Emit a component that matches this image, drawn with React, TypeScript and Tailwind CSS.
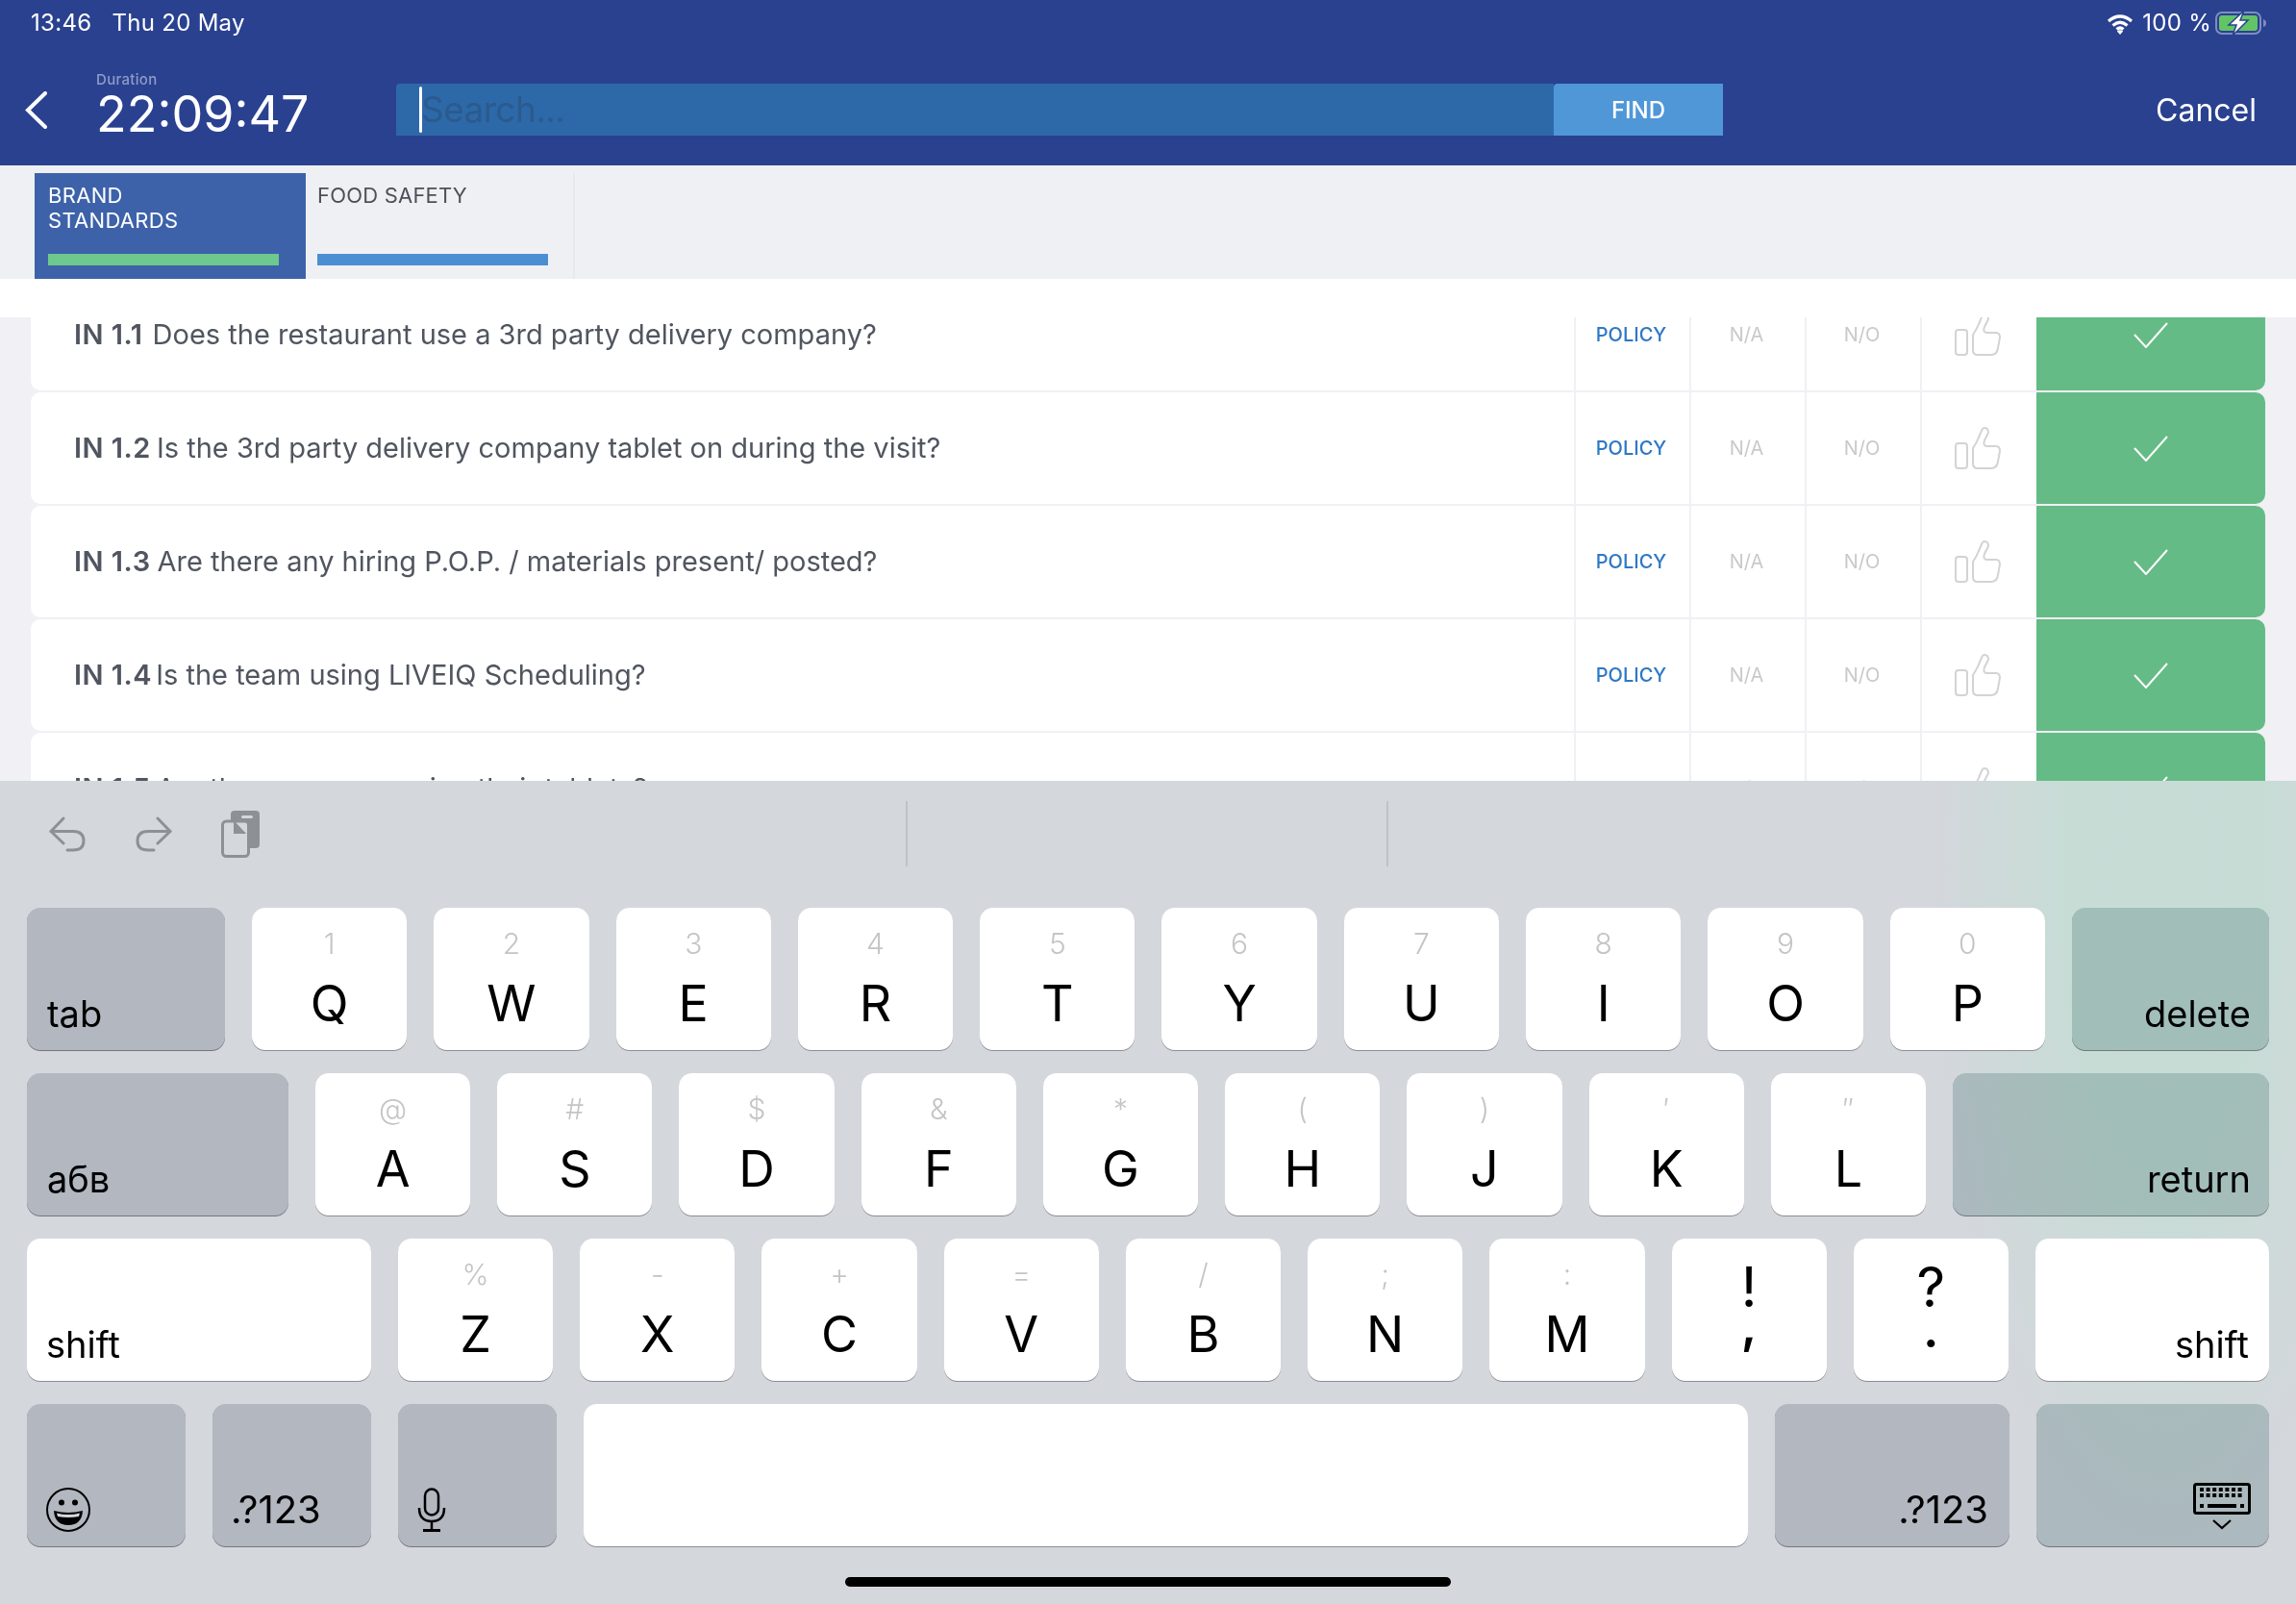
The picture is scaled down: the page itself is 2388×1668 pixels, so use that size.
const questions = [
  { id: 'IN 1.1', gap: 'mr-[10px]', text: 'Does the restaurant use a 3rd party delivery company?' },
  { id: 'IN 1.2', gap: 'mr-[6px]', text: 'Is the 3rd party delivery company tablet on during the visit?' },
  { id: 'IN 1.3', gap: 'mr-[7px]', text: 'Are there any hiring P.O.P. / materials present/ posted?' },
  { id: 'IN 1.4', gap: 'mr-[4px]', text: 'Is the team using LIVEIQ Scheduling?' },
  { id: 'IN 1.5', gap: 'mr-[6px]', text: 'Are the managers using their tablets?' },
];

const row1 = [['1', 'Q'], ['2', 'W'], ['3', 'E'], ['4', 'R'], ['5', 'T'], ['6', 'Y'], ['7', 'U'], ['8', 'I'], ['9', 'O'], ['0', 'P']];
const row2 = [['@', 'A'], ['#', 'S'], ['$', 'D'], ['&', 'F'], ['*', 'G'], ['(', 'H'], [')', 'J'], ['\u2032', 'K'], ['\u2033', 'L']];
const row3 = [['%', 'Z'], ['-', 'X'], ['+', 'C'], ['=', 'V'], ['/', 'B'], [';', 'N'], [':', 'M']];

const keyBase = 'h-[148px] rounded-[14px] shadow-[0_1px_0_#8b8d92]';

const LetterKey = ({ top, letter }: { top: string; letter: string }) => (
  <div className={`${keyBase} flex-1 min-w-0 bg-white flex flex-col items-center pt-[18px]`}>
    <span className="h-[38px] text-[30px] leading-[38px] text-[#c5c5c7] font-light">{top}</span>
    <span className="mt-[18px] text-[52px] leading-[52px] text-black">{letter}</span>
  </div>
);

const ModKey = ({ label, width, right, children, green, wide }: { label?: string; width: string; right?: boolean; children?: React.ReactNode; green?: boolean; wide?: boolean }) => (
  <div className={`${keyBase} ${width} shrink-0 mix-blend-multiply flex items-end pl-[21px] pr-[19px] pb-[19px] ${green ? 'bg-[#cfdcdc]' : 'bg-[#d6d9df]'} ${right ? 'justify-end' : ''}`}>
    {label && <span className={`leading-[38px] text-black ${wide ? (right ? 'text-[40px] mr-[3px]' : 'text-[40px] -ml-[2px]') : 'text-[38px]'}`}>{label}</span>}
    {children}
  </div>
);

const WhiteLabelKey = ({ label, width, right }: { label: string; width: string; right?: boolean }) => (
  <div className={`${keyBase} ${width} shrink-0 bg-white flex items-end pl-[20px] pr-[21px] pb-[19px] ${right ? 'justify-end' : ''}`}>
    <span className="text-[38px] leading-[38px] text-black">{label}</span>
  </div>
);

const PunctKey = ({ top, bottom, offset }: { top: string; bottom: string; offset: string }) => (
  <div className={`${keyBase} flex-1 min-w-0 bg-white flex flex-col items-center pt-[21px]`}>
    <span className="text-[58px] leading-[58px] text-black">{top}</span>
    <span className={`${offset} text-[52px] leading-[52px] font-semibold text-black`}>{bottom}</span>
  </div>
);

const ThumbIcon = () => (
  <svg width="48" height="44" viewBox="0 0 48 44" className="mb-[1px]" fill="none" stroke="#d2d3d5" strokeWidth="2">
    <rect x="1" y="17" width="12" height="26" rx="3" />
    <path d="M19 22 L19 38 Q19 43 24 43 L38 43 Q44 43 45 36 L47 25 Q47 20 43 20 H33 Q29 19 31 14 L35 6 Q35 1 31 1 Q29 1 28 4 L25 11 Q23 16 19 22Z" />
  </svg>
);

const CheckIcon = () => (
  <svg width="36" height="27" viewBox="0 0 36 27" fill="none" stroke="#ffffff" strokeWidth="2">
    <path d="M1 13 L13 26 L35 1" />
  </svg>
);

const QuestionRow = ({ id, gap, text }: { id: string; gap: string; text: string }) => (
  <div className="flex h-[116px] shrink-0 rounded-[10px] bg-white overflow-hidden">
    <div className="flex-1 min-w-0 pl-[45px] flex items-center text-[29px] text-[#50555f] whitespace-nowrap">
      <span className={`${gap} font-semibold tracking-[0.5px]`}>{id}</span>
      <span>{text}</span>
    </div>
    <div className="w-[120px] border-l-2 border-[#f0f0f5] pr-[3px] flex items-center justify-center text-[20px] font-medium text-[#2f78c4]">POLICY</div>
    <div className="w-[120px] border-l-2 border-[#f0f0f5] pr-[3px] flex items-center justify-center text-[20px] text-[#c9c9cd]">N/A</div>
    <div className="w-[120px] border-l-2 border-[#f0f0f5] pr-[3px] flex items-center justify-center text-[20px] text-[#c9c9cd]">N/O</div>
    <div className="w-[121px] border-l-2 border-[#f0f0f5] pr-[4px] flex items-center justify-center"><ThumbIcon /></div>
    <div className="w-[238px] bg-[#65bb85] flex items-center justify-center"><CheckIcon /></div>
  </div>
);

export default function App() {
  return (
    <div className="w-[2388px] h-[1668px] overflow-hidden flex flex-col bg-white [font-family:Inter,sans-serif]">
      {/* header */}
      <div className="h-[172px] shrink-0 bg-[#2a4190] text-white">
        <div className="h-[46px] flex pl-[32px] pr-[30px] pt-[12px] text-[24px] leading-[24px] tracking-[0.3px]">
          <span>13:46</span>
          <span className="ml-[21px]">Thu 20 May</span>
          <div className="ml-auto flex items-start">
            <svg width="28" height="22" viewBox="0 0 28 22" className="mt-[2px]" fill="none" stroke="#ffffff" strokeWidth="3.2">
              <path d="M2 8 Q14 -2 26 8" />
              <path d="M6.5 12.5 Q14 6 21.5 12.5" />
              <path d="M10.5 16.5 Q14 13.5 17.5 16.5" />
              <path d="M14 22 L10.8 18.6 Q14 16 17.2 18.6Z" fill="#ffffff" stroke="none" />
            </svg>
            <span className="ml-[9px]">100 %</span>
            <svg width="54" height="26" viewBox="0 0 54 26" className="ml-[4px] -mt-[1px]">
              <rect x="1" y="2" width="46" height="22" rx="6" fill="none" stroke="#7f8cc0" strokeWidth="2" />
              <rect x="4" y="5" width="40" height="16" rx="3" fill="#62c466" />
              <path d="M50 9 Q53 10 53 13 Q53 16 50 17Z" fill="#7f8cc0" />
              <path d="M30 0 L14 15 H22 L18 26 L34 10 H26Z" fill="#ffffff" stroke="#2a4190" strokeWidth="1.5" />
            </svg>
          </div>
        </div>
        <div className="flex items-start pl-[26px] pr-[41px]">
          <svg width="23" height="39" viewBox="0 0 23 39" className="mt-[49px] shrink-0" fill="none" stroke="#ffffff" strokeWidth="4" strokeLinecap="round">
            <path d="M21 2 L3 19.5 L21 37" />
          </svg>
          <div className="ml-[51px] w-[312px] shrink-0 pt-[29px]">
            <div className="text-[15px] leading-[16px] tracking-[0.3px] font-medium text-[#8f9cc7]">Duration</div>
            <div className="mt-[2px] text-[52px] leading-[52px]">22:09:47</div>
          </div>
          <div className="mt-[41px] h-[54px] flex shrink-0">
            <div className="relative w-[1204px] rounded-tl-[4px] bg-[#2d69a8] pl-[26px] text-[37px] leading-[54px] tracking-[-0.6px] text-[#2b5a8e]">
              Search...
              <div className="absolute left-[24px] top-[3px] w-[3px] h-[48px] rounded-full bg-white" />
            </div>
            <div className="w-[176px] pt-[2px] rounded-tl-[4px] bg-[#5097d8] flex items-center justify-center text-[24px] font-medium text-white">FIND</div>
          </div>
          <div className="ml-auto mt-[52px] text-[32px] leading-[34px]">Cancel</div>
        </div>
      </div>

      {/* tabs */}
      <div className="h-[118px] shrink-0 bg-[#eff0f4] pt-[8px] pl-[36px] flex">
        <div className="w-[282px] bg-[#3d62aa] pl-[14px] pt-[10px] text-white">
          <div className="h-[74px] text-[22px] leading-[26px] tracking-[0.3px]">BRAND<br />STANDARDS</div>
          <div className="w-[240px] h-[12px] bg-[#6dc98d]" />
        </div>
        <div className="w-[280px] border-r-2 border-[#e8e9ee] pl-[12px] pt-[10px] text-[#4e5058]">
          <div className="h-[74px] text-[22px] leading-[26px] tracking-[0.2px]">FOOD SAFETY</div>
          <div className="w-[240px] h-[12px] bg-[#4b8fd2]" />
        </div>
      </div>

      <div className="h-[40px] shrink-0 bg-white" />

      {/* questions */}
      <div className="flex-1 min-h-0 overflow-hidden bg-[#f0f0f5] px-[32px]">
        <div className="-mt-[40px] flex flex-col gap-[2px]">
          {questions.map((q) => (
            <QuestionRow key={q.id} id={q.id} gap={q.gap} text={q.text} />
          ))}
        </div>
      </div>

      {/* keyboard */}
      <div className="h-[856px] shrink-0 bg-[#d4d7dc] bg-[radial-gradient(ellipse_240px_700px_at_2250px_100px,#c6dcd5_0%,#c8dcd6_45%,#d4d7dc_100%)]">
        <div className="h-[110px] mb-[22px] flex items-center pl-[51px]">
          <svg width="38" height="37" viewBox="0 0 38 37" fill="none" stroke="#8d9095" strokeWidth="3" strokeLinecap="round" strokeLinejoin="round">
            <path d="M15 2 L2 15.5 L15 28" />
            <path d="M2 15.5 H25 Q36 15.5 36 25.5 Q36 35 25 35 H19" />
          </svg>
          <svg width="38" height="37" viewBox="0 0 38 37" className="ml-[52px]" fill="none" stroke="#8d9095" strokeWidth="3" strokeLinecap="round" strokeLinejoin="round">
            <path d="M23 2 L36 15.5 L23 28" />
            <path d="M36 15.5 H13 Q2 15.5 2 25.5 Q2 35 13 35 H19" />
          </svg>
          <svg width="40" height="49" viewBox="0 0 40 49" className="ml-[51px]">
            <rect x="10" y="0" width="30" height="39" rx="4" fill="#8d9095" />
            <rect x="21" y="5" width="12" height="3" rx="1.5" fill="#d4d7dc" />
            <rect x="1.5" y="11" width="27" height="36.5" rx="4" fill="#d4d7dc" stroke="#8d9095" strokeWidth="3" />
            <path d="M14 11 V24 H26 Z" fill="#8d9095" />
            <path d="M14 12 V23 H25" fill="none" stroke="#8d9095" strokeWidth="2" />
          </svg>
          <div className="ml-[672px] w-[2px] h-[68px] bg-[#bfc2c7]" />
          <div className="ml-[498px] w-[2px] h-[68px] bg-[#bfc2c7]" />
        </div>

        <div className="flex flex-col gap-[24px] px-[28px]">
          <div className="flex gap-[28px]">
            <ModKey label="tab" width="w-[206px]" />
            {row1.map(([t, l]) => <LetterKey key={l} top={t} letter={l} />)}
            <ModKey label="delete" width="w-[205px]" right green />
          </div>
          <div className="flex gap-[28px]">
            <ModKey label="абв" width="w-[272px]" />
            {row2.map(([t, l]) => <LetterKey key={l} top={t} letter={l} />)}
            <ModKey label="return" width="w-[329px]" right green />
          </div>
          <div className="flex gap-[28px]">
            <WhiteLabelKey label="shift" width="w-[358px]" />
            {row3.map(([t, l]) => <LetterKey key={l} top={t} letter={l} />)}
            <PunctKey top="!" bottom="," offset="-mt-[15px]" />
            <PunctKey top="?" bottom="." offset="-mt-[10px]" />
            <WhiteLabelKey label="shift" width="w-[243px]" right />
          </div>
          <div className="flex gap-[28px]">
            <ModKey width="w-[165px]">
              <svg width="46" height="46" viewBox="0 0 46 46" className="-mb-[4px] -ml-[1px]">
                <ellipse cx="23" cy="23" rx="22" ry="22" fill="none" stroke="#000000" strokeWidth="2" />
                <circle cx="16" cy="15.5" r="3" fill="#000000" />
                <circle cx="30" cy="15.5" r="3" fill="#000000" />
                <path d="M8 24 Q23 28 38 24 Q37 39 23 39 Q9 39 8 24Z" fill="#000000" />
                <path d="M11 26.5 Q23 29.5 35 26.5 L34 30 Q23 32 12 30Z" fill="#ffffff" />
              </svg>
            </ModKey>
            <ModKey label=".?123" width="w-[165px]" wide />
            <ModKey width="w-[165px]">
              <svg width="30" height="46" viewBox="0 0 30 46" className="-mb-[4px] -ml-[1px]" fill="none" stroke="#000000" strokeWidth="2.5">
                <rect x="8" y="1.5" width="14" height="27" rx="7" />
                <path d="M2 21 Q2 35 15 35 Q28 35 28 21" />
                <path d="M15 35 V44" />
                <path d="M6 44.5 H24" strokeWidth="3" />
              </svg>
            </ModKey>
            <div className={`${keyBase} flex-1 min-w-0 bg-white`} />
            <ModKey label=".?123" width="w-[244px]" right wide />
            <ModKey width="w-[242px]" right green>
              <svg width="60" height="50" viewBox="0 0 60 50" className="-mb-[3px]">
                <rect x="1.5" y="1.5" width="57" height="30" rx="2" fill="none" stroke="#000000" strokeWidth="3" />
                <path d="M7 7 H53 M7 13 H53" stroke="#000000" strokeWidth="4" strokeDasharray="4 2.6" fill="none" />
                <path d="M7 24 H11 M15 24 H45 M49 24 H53" stroke="#000000" strokeWidth="4" fill="none" />
                <path d="M21 39 L30 47 L39 39" stroke="#000000" strokeWidth="2.2" fill="none" />
              </svg>
            </ModKey>
          </div>
        </div>

        <div className="mt-[32px] mx-auto w-[630px] h-[10px] rounded-full bg-black" />
      </div>
    </div>
  );
}
